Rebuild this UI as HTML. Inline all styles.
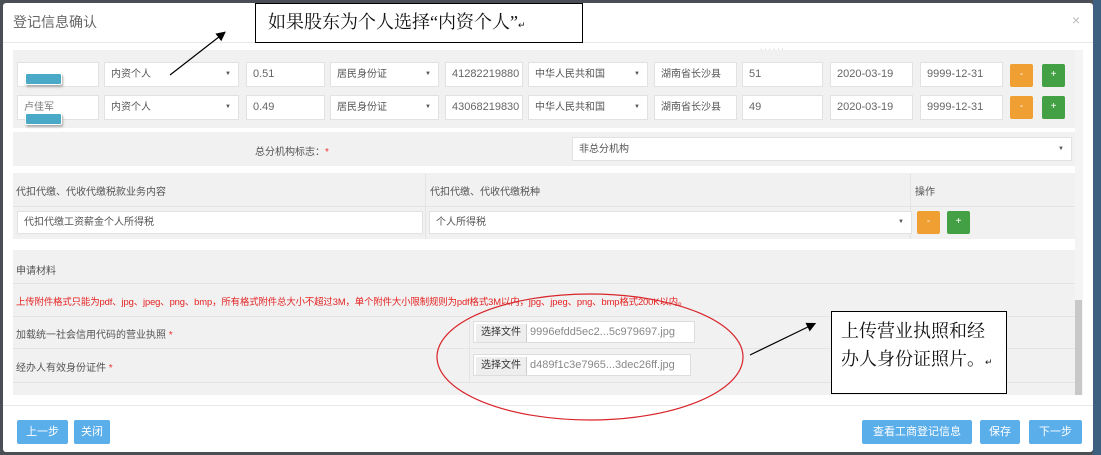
<!DOCTYPE html>
<html><head><meta charset="utf-8"><style>
*{margin:0;padding:0;box-sizing:border-box}
body{width:1101px;height:455px;overflow:hidden;background:#4a4f55;font-family:"Liberation Sans","Noto Sans CJK SC",sans-serif;font-size:10px;color:#555;position:relative}
.a{position:absolute}
.modal{left:3px;top:3px;width:1090px;height:449px;background:#fff;border-radius:3px}
.gray{background:#f1f1f1}
.in{position:absolute;background:#fff;border:1px solid #e2e2e2;height:25px;line-height:23px;padding-left:6px;font-size:10px;color:#555}
.num{font-size:11px;color:#666}
.sel::after{content:"▼";position:absolute;right:7px;top:0;font-size:6px;color:#555}
.bo{position:absolute;background:#f0a032;width:23px;height:23px;border-radius:2px;color:#fff;text-align:center;line-height:22px;font-size:10px}
.bg{position:absolute;background:#44a045;width:23px;height:23px;border-radius:2px;color:#fff;text-align:center;line-height:22px;font-size:10px}
.btn{position:absolute;background:#5aaeea;color:#fff;height:24px;line-height:24px;text-align:center;font-size:11px;border-radius:2px;top:420px}
.ln{position:absolute;height:1px;background:#e4e4e4;left:13px;width:1062px}
.tab{position:absolute;width:37px;height:12px;background:#49a9c6;border-radius:2px;box-shadow:1px 2px 2px #aaa;border:1px solid #fff}
.file{position:absolute;background:#fff;border:1px solid #ddd;height:22px;left:473px;font-size:11px;color:#888;line-height:20px}
.file span{display:inline-block;background:#eee;border-right:1px solid #ccc;color:#333;padding:0 5px;font-size:10px;margin:1px 3px 0 2px;line-height:18px}
.cb{position:absolute;background:#fff;border:1px solid #000;font-family:"Liberation Serif","Noto Serif CJK SC",serif;color:#111}
</style></head><body>
<div class="a" style="left:1093px;top:0;width:8px;height:455px;background:#3d5f80"></div>
<div class="a modal"></div>
<div class="a" style="left:13px;top:12px;font-size:14px;color:#666">登记信息确认</div>
<div class="a" style="left:1072px;top:12px;font-size:14px;color:#bbb">×</div>
<div class="a" style="left:3px;top:42px;width:1090px;height:1px;background:#e8e8e8"></div>

<div class="a gray" style="left:13px;top:50px;width:1062px;height:78px"></div>
<div class="a gray" style="left:13px;top:132px;width:1062px;height:34px"></div>
<div class="a gray" style="left:13px;top:173px;width:1062px;height:66px"></div>
<div class="a gray" style="left:13px;top:250px;width:1062px;height:145px"></div>
<div class="a" style="left:1075px;top:50px;width:8px;height:345px;background:#f4f4f4"></div>
<div class="a" style="left:1075px;top:300px;width:7px;height:95px;background:#c8c8c8"></div>
<div class="a" style="left:760px;top:46px;font-size:7px;color:#999">· · · · · ·</div>

<!-- row1 -->
<div class="in" style="left:17px;top:62px;width:82px"></div>
<div class="in sel" style="left:104px;top:62px;width:135px">内资个人</div>
<div class="in num" style="left:246px;top:62px;width:79px">0.51</div>
<div class="in sel" style="left:330px;top:62px;width:109px">居民身份证</div>
<div class="in num" style="left:445px;top:62px;width:78px">41282219880</div>
<div class="in sel" style="left:528px;top:62px;width:120px">中华人民共和国</div>
<div class="in" style="left:654px;top:62px;width:83px">湖南省长沙县</div>
<div class="in num" style="left:742px;top:62px;width:81px">51</div>
<div class="in num" style="left:830px;top:62px;width:83px">2020-03-19</div>
<div class="in num" style="left:920px;top:62px;width:83px">9999-12-31</div>
<div class="bo" style="left:1010px;top:64px">-</div><div class="bg" style="left:1042px;top:64px">+</div>
<!-- row2 -->
<div class="in" style="left:17px;top:95px;width:82px;color:#777">卢佳军</div>
<div class="in sel" style="left:104px;top:95px;width:135px">内资个人</div>
<div class="in num" style="left:246px;top:95px;width:79px">0.49</div>
<div class="in sel" style="left:330px;top:95px;width:109px">居民身份证</div>
<div class="in num" style="left:445px;top:95px;width:78px">43068219830</div>
<div class="in sel" style="left:528px;top:95px;width:120px">中华人民共和国</div>
<div class="in" style="left:654px;top:95px;width:83px">湖南省长沙县</div>
<div class="in num" style="left:742px;top:95px;width:81px">49</div>
<div class="in num" style="left:830px;top:95px;width:83px">2020-03-19</div>
<div class="in num" style="left:920px;top:95px;width:83px">9999-12-31</div>
<div class="bo" style="left:1010px;top:96px">-</div><div class="bg" style="left:1042px;top:96px">+</div>
<div class="tab" style="left:25px;top:73px"></div>
<div class="tab" style="left:25px;top:113px"></div>

<div class="a" style="left:255px;top:143px">总分机构标志：<span style="color:#e33">*</span></div>
<div class="in sel" style="left:572px;top:137px;width:500px;height:24px">非总分机构</div>

<div class="ln" style="top:206px"></div>
<div class="a" style="left:425px;top:173px;width:1px;height:66px;background:#e4e4e4"></div>
<div class="a" style="left:910px;top:173px;width:1px;height:66px;background:#e4e4e4"></div>
<div class="a" style="left:16px;top:183px">代扣代缴、代收代缴税款业务内容</div>
<div class="a" style="left:430px;top:183px">代扣代缴、代收代缴税种</div>
<div class="a" style="left:915px;top:183px">操作</div>
<div class="in" style="left:17px;top:211px;width:406px;height:23px;line-height:21px">代扣代缴工资薪金个人所得税</div>
<div class="in sel" style="left:429px;top:211px;width:483px;height:23px;line-height:21px">个人所得税</div>
<div class="bo" style="left:917px;top:211px">-</div><div class="bg" style="left:947px;top:211px">+</div>

<div class="a" style="left:16px;top:262px">申请材料</div>
<div class="ln" style="top:283px"></div>
<div class="a" style="left:16px;top:294px;color:#e52222;font-size:9.4px;letter-spacing:-0.1px;white-space:nowrap">上传附件格式只能为pdf、jpg、jpeg、png、bmp，所有格式附件总大小不超过3M，单个附件大小限制规则为pdf格式3M以内，jpg、jpeg、png、bmp格式200K以内。</div>
<div class="ln" style="top:316px"></div>
<div class="ln" style="top:348px"></div>
<div class="ln" style="top:382px"></div>
<div class="a" style="left:469px;top:316px;width:1px;height:66px;background:#e4e4e4"></div>
<div class="a" style="left:16px;top:326px">加载统一社会信用代码的营业执照 <span style="color:#e33">*</span></div>
<div class="a" style="left:16px;top:359px">经办人有效身份证件 <span style="color:#e33">*</span></div>
<div class="file" style="top:321px;width:222px"><span>选择文件</span>9996efdd5ec2...5c979697.jpg</div>
<div class="file" style="top:354px;width:218px"><span>选择文件</span>d489f1c3e7965...3dec26ff.jpg</div>

<div class="a" style="left:3px;top:405px;width:1090px;height:1px;background:#e8e8e8"></div>
<div class="btn" style="left:17px;width:51px">上一步</div>
<div class="btn" style="left:74px;width:36px">关闭</div>
<div class="btn" style="left:862px;width:110px">查看工商登记信息</div>
<div class="btn" style="left:980px;width:40px">保存</div>
<div class="btn" style="left:1029px;width:53px">下一步</div>

<div class="cb" style="left:255px;top:3px;width:328px;height:40px;font-size:18px;line-height:36px;padding-left:12px">如果股东为个人选择“内资个人”<span style="font-size:9px">↵</span></div>
<div class="cb" style="left:831px;top:311px;width:176px;height:83px;font-size:18px;line-height:28px;padding:5px 0 0 9px">上传营业执照和经<br>办人身份证照片。<span style="font-size:9px">↵</span></div>

<svg class="a" style="left:0;top:0" width="1101" height="455">
<defs><marker id="m" markerWidth="8" markerHeight="8" refX="6" refY="4" orient="auto"><path d="M0,0 L8,4 L0,8 z" fill="#000"/></marker></defs>
<line x1="170" y1="75" x2="224" y2="33" stroke="#000" stroke-width="1.2" marker-end="url(#m)"/>
<line x1="750" y1="355" x2="814" y2="324" stroke="#000" stroke-width="1.2" marker-end="url(#m)"/>
<ellipse cx="590" cy="357" rx="153" ry="63" fill="none" stroke="#d8242a" stroke-width="1.2"/>
</svg>
</body></html>
